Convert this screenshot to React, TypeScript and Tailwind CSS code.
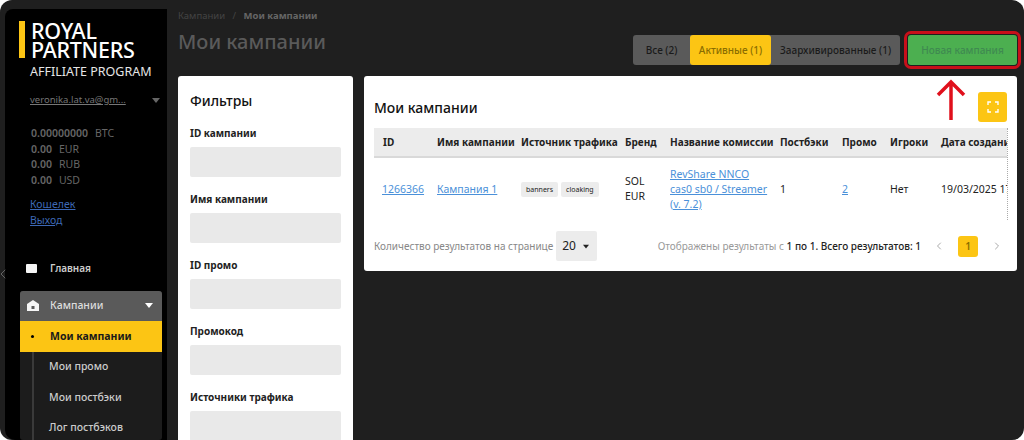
import { ChevronLeft, ChevronRight } from "lucide-react";

const font = { fontFamily: '"Noto Sans", "Open Sans", sans-serif' };

const balances = [
  ["0.00000000", "BTC"],
  ["0.00", "EUR"],
  ["0.00", "RUB"],
  ["0.00", "USD"],
];

const filters = ["ID кампании", "Имя кампании", "ID промо", "Промокод", "Источники трафика"];

const columns = [
  { name: "ID", w: "w-[54px]" },
  { name: "Имя кампании", w: "w-[84px]" },
  { name: "Источник трафика", w: "w-[104px]" },
  { name: "Бренд", w: "w-[45px]" },
  { name: "Название комиссии", w: "w-[110px]" },
  { name: "Постбэки", w: "w-[62px]" },
  { name: "Промо", w: "w-[48px]" },
  { name: "Игроки", w: "w-[51px]" },
  { name: "Дата создания", w: "w-[75px]" },
];

function Caret({ className }: { className?: string }) {
  return (
    <svg width="8" height="5" viewBox="0 0 8 5" className={className}>
      <path d="M0 0h8L4 5z" fill="currentColor" />
    </svg>
  );
}

function Sidebar() {
  return (
    <aside className="w-[162px] shrink-0 bg-black mt-[9px] ml-[5px] rounded-tl-[8px] rounded-bl-[10px] flex flex-col pl-[14px] h-[431px]">
      <div className="flex gap-[6px] mt-[11px]">
        <div className="w-[6px] h-[37px] bg-[#fcc514] mt-[1px]" />
        <div className="text-white font-medium text-[21.5px] leading-[19px] tracking-[-0.3px] pt-[1px]">
          ROYAL
          <br />
          PARTNERS
        </div>
      </div>
      <div className="text-[#e6e6e6] text-[12.5px] leading-[14px] ml-[11px] mt-[6px] whitespace-nowrap">AFFILIATE PROGRAM</div>

      <div className="flex items-center mt-[14px] pl-[11px] w-[141px] justify-between text-[#777]">
        <span className="text-[9.5px] leading-[14px] underline whitespace-nowrap">veronika.lat.va@gm...</span>
        <Caret className="text-[#666]" />
      </div>

      <div className="mt-[19px] ml-[12px] flex flex-col gap-[1.5px]">
        {balances.map(([v, c]) => (
          <div key={c} className="flex gap-[7px] text-[10.5px] leading-[14px] text-[#666]">
            <span className="font-semibold">{v}</span>
            <span>{c}</span>
          </div>
        ))}
      </div>

      <div className="mt-[10px] ml-[11px] flex flex-col gap-[2px] text-[10.5px] leading-[14px] text-[#3d68b4] underline">
        <a>Кошелек</a>
        <a>Выход</a>
      </div>

      <div className="flex items-center mt-[27px] h-[30px] pl-[7px] text-[#ccc] text-[10px] font-semibold">
        <svg width="12" height="9" viewBox="0 0 12 9" className="mr-[12px]">
          <rect width="11" height="9" rx="1" fill="#f5f5f5" />
        </svg>
        Главная
      </div>

      <div className="mt-[8px] w-[142px] rounded-[3px] overflow-hidden bg-[#1c1c1c] ml-px text-[10.5px]">
        <div className="h-[30px] bg-[#5a5a5a] flex items-center pl-[7px] pr-[9px] text-[#ddd] font-medium">
          <svg width="12" height="11" viewBox="0 0 12 11" className="mr-[11px]">
            <path d="M6 0l6 4v7H0V4z" fill="#f5f5f5" />
            <rect x="4.5" y="6" width="3" height="3" fill="#5a5a5a" />
          </svg>
          <span className="flex-1">Кампании</span>
          <Caret className="text-white" />
        </div>
        <div className="h-[31px] bg-[#fcc514] flex items-center text-[#1a1a1a] font-bold">
          <span className="w-[3px] h-[3px] rounded-full bg-black ml-[11px] mr-[16px]" />
          Мои кампании
        </div>
        <div className="border-l-[2px] border-[#3a3a3a] ml-[12px] pl-[15px] text-[#ccc] font-medium">
          <div className="h-[30px] flex items-center">Мои промо</div>
          <div className="h-[31px] flex items-center">Мои постбэки</div>
          <div className="h-[30px] flex items-center">Лог постбэков</div>
        </div>
      </div>
    </aside>
  );
}

function Filters() {
  return (
    <div className="w-[175px] h-[400px] shrink-0 bg-white rounded-t-[3px] px-[12px] pt-[16px]">
      <div className="text-[14px] leading-[18px] font-medium text-[#111] mb-[16px]">Фильтры</div>
      <div className="flex flex-col gap-[15px]">
        {filters.map((f) => (
          <div key={f}>
            <div className="text-[10px] leading-[14px] font-bold text-[#222] mb-[7px]">{f}</div>
            <div className="h-[30px] rounded-[2px] bg-[#e9e9e9]" />
          </div>
        ))}
      </div>
    </div>
  );
}

function CampaignsTable() {
  return (
    <div className="flex-1 h-[195px] bg-white rounded-[3px] px-[10px]">
      <div className="flex items-center justify-between h-[52px] pt-[10px]">
        <div className="text-[14px] font-medium text-[#111]">Мои кампании</div>
        <button className="w-[29px] h-[30px] rounded-[3px] bg-[#fcc514] flex items-center justify-center">
          <svg width="12" height="12" viewBox="0 0 12 12" fill="none" stroke="#fff" strokeWidth="1.4">
            <path d="M1 4V1h3M8 1h3v3M11 8v3H8M4 11H1V8" />
          </svg>
        </button>
      </div>
      <div className="border-r border-dotted border-[#aaa] mr-[-1px]">
        <div className="flex h-[30px] items-center bg-[#ececec] border-b-[2px] border-[#d9d9d9] text-[10px] font-bold text-[#222] overflow-hidden">
          {columns.map((c) => (
            <div key={c.name} className={`${c.w} shrink-0 pl-[9px] whitespace-nowrap`}>
              {c.name}
            </div>
          ))}
        </div>
        <div className="flex h-[62px] items-center text-[10.5px] leading-[15px] text-[#222] overflow-hidden">
          <div className="w-[54px] shrink-0 pl-[8px]"><a className="text-[#4a90d9] underline">1266366</a></div>
          <div className="w-[84px] shrink-0 pl-[9px] whitespace-nowrap"><a className="text-[#4a90d9] underline">Кампания 1</a></div>
          <div className="w-[104px] shrink-0 pl-[9px] flex gap-[3px]">
            <span className="bg-[#ececec] rounded-[2px] px-[5px] text-[7px] leading-[15px]">banners</span>
            <span className="bg-[#ececec] rounded-[2px] px-[5px] text-[7px] leading-[15px]">cloaking</span>
          </div>
          <div className="w-[45px] shrink-0 pl-[9px]">SOL<br />EUR</div>
          <div className="w-[110px] shrink-0 pl-[9px]">
            <a className="text-[#4a90d9] underline">RevShare NNCO cas0 sb0 / Streamer (v. 7.2)</a>
          </div>
          <div className="w-[62px] shrink-0 pl-[9px]">1</div>
          <div className="w-[48px] shrink-0 pl-[9px]"><a className="text-[#4a90d9] underline">2</a></div>
          <div className="w-[51px] shrink-0 pl-[9px]">Нет</div>
          <div className="w-[75px] shrink-0 pl-[9px] whitespace-nowrap">19/03/2025 17:</div>
        </div>
      </div>
      <div className="flex items-center h-[30px] mt-[11px] text-[10px]">
        <span className="text-[#888] whitespace-nowrap">Количество результатов на странице</span>
        <div className="w-[41px] h-[30px] ml-[3px] bg-[#ececec] rounded-[2px] flex items-center pl-[6px] gap-[7px] text-[12px] text-[#222]">
          20
          <Caret className="text-[#222] w-[6px]" />
        </div>
        <span className="ml-auto text-[#999] whitespace-nowrap">
          Отображены результаты с <span className="text-[#222] font-medium">1 по 1. Всего результатов: 1</span>
        </span>
        <ChevronLeft size={12} className="text-[#aaa] ml-[12px]" />
        <div className="w-[20px] h-[21px] mx-[13px] rounded-[3px] bg-[#fcc514] flex items-center justify-center text-[#8a6d00] font-semibold">1</div>
        <ChevronRight size={12} className="text-[#aaa] mr-[4px]" />
      </div>
    </div>
  );
}

export default function App() {
  return (
    <div className="w-[1024px] h-[440px] overflow-hidden bg-white" style={font}>
      <div className="relative w-full h-full bg-[#1f1f1f] rounded-[12px] flex overflow-hidden">
        <Sidebar />
        <ChevronLeft size={16} strokeWidth={1} className="absolute left-[-5px] top-[266px] text-[#888]" />
        <main className="flex-1 min-w-0 pl-[11px] pr-[7px]">
          <div className="flex justify-between h-[76px]">
            <div>
              <div className="text-[9.5px] leading-[14px] mt-[9px] text-[#444] whitespace-nowrap">
                Кампании <span className="mx-[5px]">/</span> <span className="text-[#666] font-bold">Мои кампании</span>
              </div>
              <div className="text-[20px] leading-[26px] mt-[6px] text-[#5a5a5a] font-medium">Мои кампании</div>
            </div>
            <div className="flex mt-[35px] h-[30px]">
              <div className="flex rounded-[3px] bg-[#5a5a5a] text-[10px] font-medium text-[#1a1a1a]">
                <div className="w-[57px] flex items-center justify-center">Все (2)</div>
                <div className="w-[81px] flex items-center justify-center rounded-[3px] bg-[#fcc514] text-[#8a6d00]">Активные (1)</div>
                <div className="w-[129px] flex items-center justify-center whitespace-nowrap">Заархивированные (1)</div>
              </div>
              <button className="w-[109px] ml-[8px] rounded-[3px] bg-[#4caf50] text-[10px] font-medium text-[#3f8a50] outline-[3px] outline-solid outline-[#c8101a] outline-offset-[1px]">
                Новая кампания
              </button>
            </div>
          </div>
          <div className="flex gap-[11px] items-start">
            <Filters />
            <CampaignsTable />
          </div>
        </main>
        <svg width="30" height="42" viewBox="0 0 30 42" className="absolute left-[936px] top-[79px]" fill="none" stroke="#e0101c" strokeWidth="3.5">
          <path d="M15 41V3M2 16L15 3l13 13" />
        </svg>
      </div>
    </div>
  );
}
